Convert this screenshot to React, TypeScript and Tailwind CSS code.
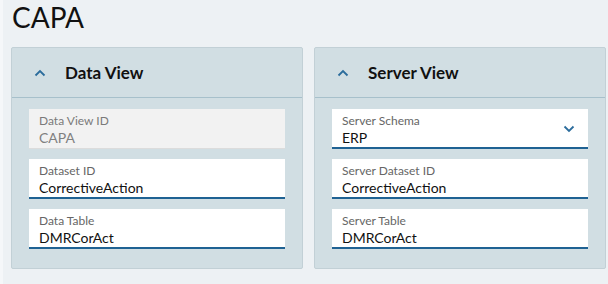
import React from 'react';

type Field = {
  label: string;
  value: string;
  disabled?: boolean;
  select?: boolean;
};

const font = { fontFamily: 'Lato, "Liberation Sans", sans-serif' };

function Chevron({ down }: { down?: boolean }) {
  return (
    <svg width="12" height="8" viewBox="0 0 12 8" className={down ? 'rotate-180' : ''}>
      <path d="M1.5 6.5 L6 2 L10.5 6.5" fill="none" stroke="#2b6c9c" strokeWidth="1.8" />
    </svg>
  );
}

function Input({ field }: { field: Field }) {
  return (
    <div
      className={`h-[40px] px-[10px] pt-[5px] flex items-start justify-between ${
        field.disabled ? 'bg-[#f2f2f2] border-b border-[#dcdcdc]' : 'bg-white border-b-2 border-[#1f6293]'
      }`}
    >
      <div className="flex flex-col gap-[2px]">
        <span className={`text-[12px] leading-[14px] ${field.disabled ? 'text-[#7a7a7a]' : 'text-[#666]'}`}>
          {field.label}
        </span>
        <span className={`text-[14px] leading-[16px] ${field.disabled ? 'text-[#808080]' : 'text-[#111]'}`}>
          {field.value}
        </span>
      </div>
      {field.select && (
        <div className="pt-[11px] pr-[3px]">
          <Chevron down />
        </div>
      )}
    </div>
  );
}

function Panel({ title, fields }: { title: string; fields: Field[] }) {
  return (
    <div className="border border-[#c2d0d6] bg-[#d1dee3] rounded-[2px] h-[222px] flex flex-col">
      <div className="h-[50px] flex items-center gap-[19px] pl-[22px] border-b border-[#a7c0cb]">
        <Chevron />
        <span className="text-[17px] font-bold text-[#111]">{title}</span>
      </div>
      <div className="flex flex-col gap-[10px] px-[17px] pt-[11px]">
        {fields.map((f) => (
          <Input key={f.label} field={f} />
        ))}
      </div>
    </div>
  );
}

export default function App() {
  return (
    <div className="w-[608px] h-[284px] bg-[#edf1f4] border-l-[3px] border-[#f5f7f9] pl-[8px] pr-[2px] overflow-hidden" style={font}>
      <h1 className="text-[28px] leading-[34px] font-normal text-[#111] pl-[1px]">CAPA</h1>
      <div className="grid grid-cols-2 gap-[11px] mt-[13px]">
        <Panel
          title="Data View"
          fields={[
            { label: 'Data View ID', value: 'CAPA', disabled: true },
            { label: 'Dataset ID', value: 'CorrectiveAction' },
            { label: 'Data Table', value: 'DMRCorAct' },
          ]}
        />
        <Panel
          title="Server View"
          fields={[
            { label: 'Server Schema', value: 'ERP', select: true },
            { label: 'Server Dataset ID', value: 'CorrectiveAction' },
            { label: 'Server Table', value: 'DMRCorAct' },
          ]}
        />
      </div>
    </div>
  );
}
